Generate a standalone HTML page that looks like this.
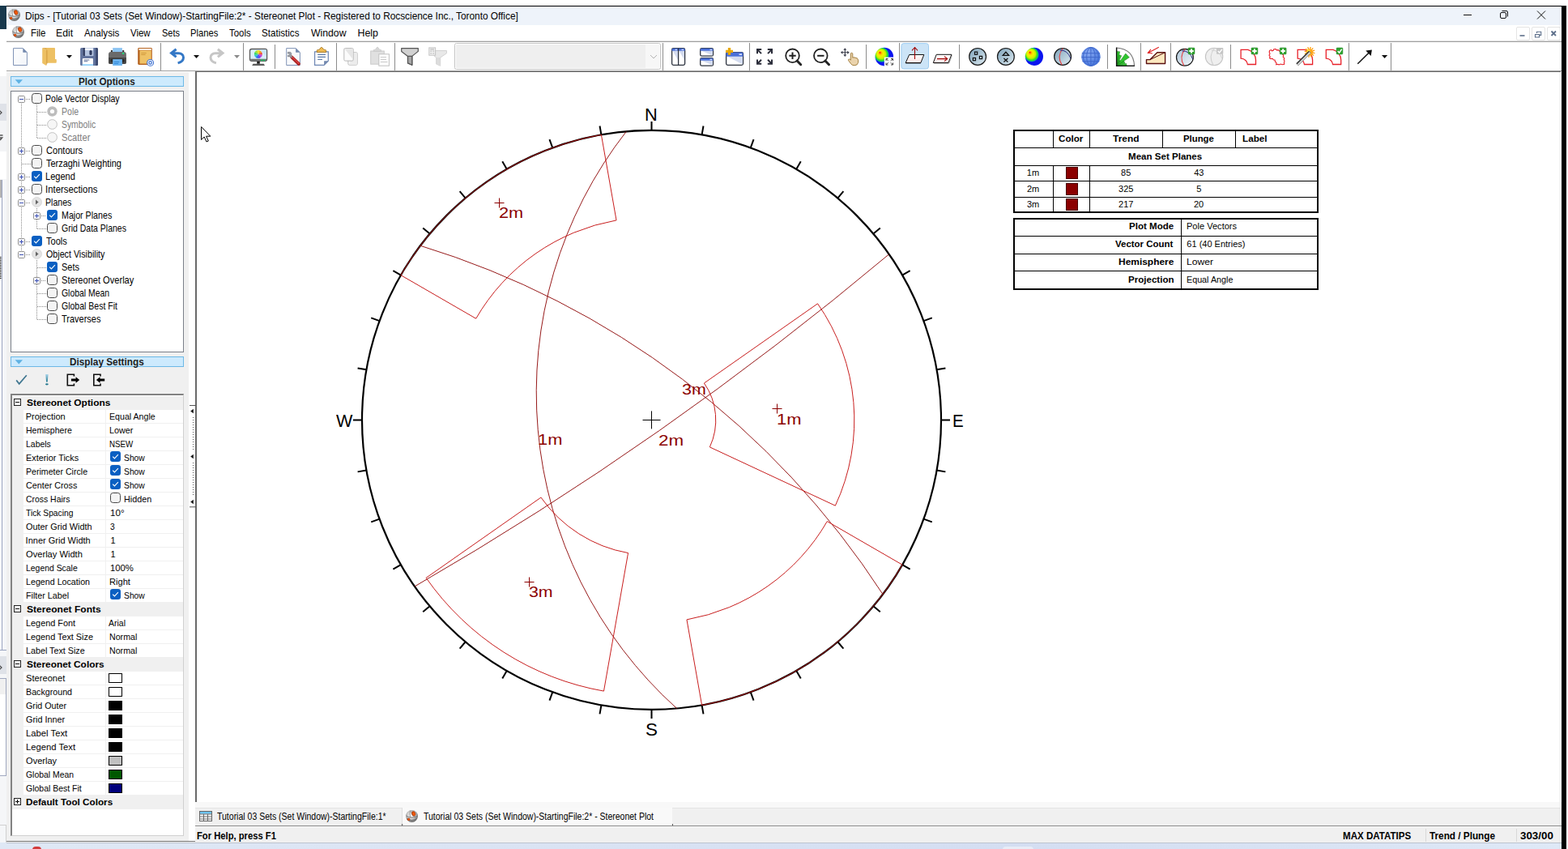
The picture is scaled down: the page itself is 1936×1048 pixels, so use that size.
<!DOCTYPE html><html><head><meta charset="utf-8"><title>Dips</title><style>
html,body{margin:0;padding:0;}
body{width:1936px;height:1048px;position:relative;overflow:hidden;background:#fff;font-family:"Liberation Sans",sans-serif;}
.t{position:absolute;white-space:nowrap;transform-origin:0 50%;}
.b{position:absolute;box-sizing:border-box;}
svg{position:absolute;overflow:visible;}
</style></head><body>
<div class="b" style="left:0px;top:36px;width:9px;height:1004px;background:#fff;"></div>
<div class="b" style="left:0px;top:94px;width:8px;height:93px;background:#f3f4f6;"></div>
<div class="b" style="left:0px;top:128px;width:8px;height:21px;background:#dfe2e8;"></div>
<svg style="left:0;top:128px" width="8" height="60" viewBox="0 0 8 60"><path d="M-2 7L2 11L-2 15" fill="none" stroke="#444" stroke-width="1.200"/><path d="M-3 39H3.500M-3 42H2.500L0 45" fill="none" stroke="#555" stroke-width="1.600"/></svg>
<div class="b" style="left:0px;top:221px;width:8px;height:819px;background:#f5f6f8;"></div>
<div class="b" style="left:0px;top:222px;width:2px;height:581px;background:#fff;"></div>
<div class="b" style="left:0px;top:222px;width:2px;height:22px;background:#b4b4b4;"></div>
<div class="b" style="left:1.5px;top:222px;width:1px;height:581px;background:#9aa4c0;"></div>
<div class="b" style="left:0px;top:802px;width:8px;height:1px;background:#9aa4c0;"></div>
<svg style="left:0;top:317px" width="2" height="28" viewBox="0 0 2 28"><path d="M0 0.500H1.500M0 2.500H1.500M0 4.500H1.500M0 6.500H1.500M0 8.500H1.500M0 10.500H1.500M0 12.500H1.500M0 14.500H1.500M0 16.500H1.500M0 18.500H1.500M0 20.500H1.500M0 22.500H1.500M0 24.500H1.500M0 26.500H1.500" stroke="#111" stroke-width="1"/></svg>
<div class="b" style="left:0px;top:810px;width:8px;height:22px;background:#dfe2e8;"></div>
<svg style="left:0;top:810px" width="8" height="22" viewBox="0 0 8 22"><path d="M-2 10L2 14L-2 18" fill="none" stroke="#444" stroke-width="1.200"/></svg>
<div class="b" style="left:-1px;top:837px;width:8.5px;height:121px;background:#fff;border:1px solid #a0a8c0;"></div>
<div class="b" style="left:0px;top:838px;width:6.5px;height:19px;background:#f0f0f0;"></div>
<div class="b" style="left:0px;top:1018px;width:7px;height:1px;background:#d0d0d0;"></div>
<div class="b" style="left:6.5px;top:1018px;width:1px;height:22px;background:#d0d0d0;"></div>
<div class="b" style="left:0px;top:7px;width:8px;height:29px;background:#17384c;"></div>
<div class="b" style="left:8px;top:7px;width:1926px;height:1px;background:#000;"></div>
<div class="b" style="left:1928px;top:7px;width:6px;height:1041px;background:#000;"></div>
<div class="b" style="left:9px;top:8px;width:1919px;height:23px;background:#eef3fa;"></div>
<svg style="left:10px;top:10.8px" width="15" height="15" viewBox="0 0 15 15"><defs><radialGradient id="lg1" cx="45%" cy="42%" r="58%"><stop offset="0" stop-color="#fafafa"/><stop offset="0.55" stop-color="#d0d0d0"/><stop offset="0.85" stop-color="#8c8c8c"/><stop offset="1" stop-color="#5c5c5c"/></radialGradient></defs><circle cx="7.5" cy="7.500" r="7.400" fill="url(#lg1)"/><path d="M5.600 0.600 C4.800 3.500 5 6.500 5.800 8.800" fill="none" stroke="#777" stroke-width="0.700"/><path d="M0.500 6.800 C3.500 9.800 10.500 10 14.700 7.200" fill="none" stroke="#6e6e6e" stroke-width="0.900"/><path d="M1.200 10.800 C4.500 13.200 10.500 13 13.800 10.300" fill="none" stroke="#707070" stroke-width="1.100"/><path d="M7.200 1.300 C6.800 5 8.500 8 12.200 8.200" fill="none" stroke="#7a7a7a" stroke-width="0.800"/><ellipse cx="9.700" cy="4.400" rx="2.300" ry="3.100" fill="#b8400c" transform="rotate(-22 9.700 4.400)"/><ellipse cx="9.900" cy="4.600" rx="1.500" ry="2.200" fill="#f25a0a" transform="rotate(-22 9.900 4.600)"/><circle cx="3.600" cy="11.400" r="1.700" fill="#b8400c"/><circle cx="3.700" cy="11.400" r="1" fill="#f25a0a"/></svg>
<span class="t" style="left:30.65px;top:13px;font-size:12.4px;line-height:14px;color:#000;transform:scaleX(0.9550);">Dips - [Tutorial 03 Sets (Set Window)-StartingFile:2* - Stereonet Plot - Registered to Rocscience Inc., Toronto Office]</span>
<svg style="left:1800px;top:8px" width="128" height="23" viewBox="0 0 128 23"><g fill="none" stroke="#111" stroke-width="1"><path d="M7 10.5H17"/><rect x="52.5" y="7.5" width="7" height="7" rx="1.5"/><path d="M54.5 5.5H60a1.5 1.5 0 0 1 1.5 1.5V12.5"/><path d="M98 5.5L108 15.5M108 5.5L98 15.5"/></g></svg>
<div class="b" style="left:9px;top:31px;width:1919px;height:19px;background:#fff;"></div>
<svg style="left:15px;top:32px" width="15" height="15" viewBox="0 0 15 15"><defs><radialGradient id="lg2" cx="45%" cy="42%" r="58%"><stop offset="0" stop-color="#fafafa"/><stop offset="0.55" stop-color="#d0d0d0"/><stop offset="0.85" stop-color="#8c8c8c"/><stop offset="1" stop-color="#5c5c5c"/></radialGradient></defs><circle cx="7.5" cy="7.500" r="7.400" fill="url(#lg2)"/><path d="M5.600 0.600 C4.800 3.500 5 6.500 5.800 8.800" fill="none" stroke="#777" stroke-width="0.700"/><path d="M0.500 6.800 C3.500 9.800 10.500 10 14.700 7.200" fill="none" stroke="#6e6e6e" stroke-width="0.900"/><path d="M1.200 10.800 C4.500 13.200 10.500 13 13.800 10.300" fill="none" stroke="#707070" stroke-width="1.100"/><path d="M7.200 1.300 C6.800 5 8.500 8 12.200 8.200" fill="none" stroke="#7a7a7a" stroke-width="0.800"/><ellipse cx="9.700" cy="4.400" rx="2.300" ry="3.100" fill="#b8400c" transform="rotate(-22 9.700 4.400)"/><ellipse cx="9.900" cy="4.600" rx="1.500" ry="2.200" fill="#f25a0a" transform="rotate(-22 9.900 4.600)"/><circle cx="3.600" cy="11.400" r="1.700" fill="#b8400c"/><circle cx="3.700" cy="11.400" r="1" fill="#f25a0a"/></svg>
<span class="t" style="left:37.58px;top:34px;font-size:12.4px;line-height:14px;color:#000;transform:scaleX(0.9238);">File</span>
<span class="t" style="left:68.52px;top:34px;font-size:12.4px;line-height:14px;color:#000;transform:scaleX(0.9868);">Edit</span>
<span class="t" style="left:104.00px;top:34px;font-size:12.4px;line-height:14px;color:#000;transform:scaleX(0.9404);">Analysis</span>
<span class="t" style="left:160.94px;top:34px;font-size:12.4px;line-height:14px;color:#000;transform:scaleX(0.9216);">View</span>
<span class="t" style="left:199.51px;top:34px;font-size:12.4px;line-height:14px;color:#000;transform:scaleX(0.8826);">Sets</span>
<span class="t" style="left:234.60px;top:34px;font-size:12.4px;line-height:14px;color:#000;transform:scaleX(0.9042);">Planes</span>
<span class="t" style="left:283.27px;top:34px;font-size:12.4px;line-height:14px;color:#000;transform:scaleX(0.9200);">Tools</span>
<span class="t" style="left:323.48px;top:34px;font-size:12.4px;line-height:14px;color:#000;transform:scaleX(0.9367);">Statistics</span>
<span class="t" style="left:383.94px;top:34px;font-size:12.4px;line-height:14px;color:#000;transform:scaleX(0.9873);">Window</span>
<span class="t" style="left:441.51px;top:34px;font-size:12.4px;line-height:14px;color:#000;">Help</span>
<div class="b" style="left:1871.5px;top:32.5px;width:17px;height:17px;background:#fff;border:1px solid #e5e5e5;border-radius:2px;"></div>
<div class="b" style="left:1890.5px;top:32.5px;width:17px;height:17px;background:#fff;border:1px solid #e5e5e5;border-radius:2px;"></div>
<div class="b" style="left:1909.5px;top:32.5px;width:17px;height:17px;background:#fff;border:1px solid #e5e5e5;border-radius:2px;"></div>
<svg style="left:1871px;top:32px" width="57" height="18" viewBox="0 0 57 18"><g fill="none" stroke="#5d6f8a" stroke-width="1.3"><path d="M5.5 12H11.5" stroke-width="1.6"/><path d="M24.5 10.5h5v3.5h-5z M26.5 9V7.2h5.2v4.2H30" stroke-width="1.1"/><path d="M44.5 6.5L50 12M50 6.5L44.5 12" stroke-width="1.8"/></g></svg>
<div class="b" style="left:8px;top:50px;width:1920px;height:1px;background:#e0e0e0;"></div>
<div class="b" style="left:8px;top:51px;width:1920px;height:1px;background:#a0a0a0;"></div>
<div class="b" style="left:8px;top:52px;width:1920px;height:35px;background:#fff;"></div>
<div class="b" style="left:8px;top:87px;width:1920px;height:1px;background:#a0a0a0;"></div>
<div class="b" style="left:8px;top:88px;width:1920px;height:1px;background:#fff;"></div>
<div class="b" style="left:8px;top:89px;width:1920px;height:951px;background:#f0f0f0;"></div>
<div class="b" style="left:233px;top:89px;width:8px;height:949px;background:#fff;"></div>
<div class="b" style="left:241px;top:88px;width:1686px;height:902px;background:#fff;border-left:2px solid #696969;border-top:1px solid #696969;"></div>
<div class="b" style="left:1927px;top:88px;width:1px;height:902px;background:#fff;"></div>
<div class="b" style="left:1926px;top:89px;width:1px;height:901px;background:#e8e8e8;"></div>
<div class="b" style="left:241px;top:990px;width:1687px;height:7px;background:#f8f8f8;"></div>
<div class="b" style="left:496.5px;top:997px;width:333.5px;height:22px;background:#f9f9f9;"></div>
<div class="b" style="left:241px;top:997px;width:255.5px;height:1px;background:#e4e4e4;"></div>
<div class="b" style="left:830px;top:997px;width:1097px;height:1px;background:#e4e4e4;"></div>
<div class="b" style="left:496px;top:997px;width:1px;height:21px;background:#e0e0e0;"></div>
<div class="b" style="left:241px;top:1019px;width:1687px;height:1px;background:#8a8a8a;"></div>
<div class="b" style="left:241px;top:1020px;width:1687px;height:1px;background:#fafafa;"></div>
<div class="b" style="left:8px;top:1038px;width:233px;height:1px;background:#777;"></div>
<div class="b" style="left:0px;top:1040px;width:1928px;height:8px;background:linear-gradient(90deg,#dfe8f5,#dbe4f4 30%,#d4def2 65%,#d9e3f4 85%,#dfe9f7);"></div>
<div class="b" style="left:1238px;top:1045px;width:38px;height:6px;background:#e8edf7;border-radius:4px 4px 0 0;"></div>
<div class="b" style="left:8px;top:1040px;width:1920px;height:1px;background:#bcc3cf;"></div>
<svg style="left:233px;top:495px" width="9" height="136" viewBox="0 0 9 136"><g fill="#111" stroke="none"><path d="M2.2 12.5 L5.8 9.7 V15.3 Z"/><path d="M2.2 68.5 L5.8 65.7 V71.3 Z"/><path d="M2.2 124.5 L5.8 121.7 V127.3 Z"/></g><path d="M1 5.5H9M1 130.800H9" stroke="#555" stroke-width="1" fill="none"/><path d="M5.5 20V61M5.5 76V117" stroke="#555" stroke-width="1" stroke-dasharray="1 2" fill="none"/></svg>
<svg style="left:246px;top:1001px" width="16" height="13" viewBox="0 0 16 13"><rect x="0.5" y="0.5" width="15" height="12" fill="#fff" stroke="#666"/><rect x="1" y="1" width="14" height="2.6" fill="#6cc3f7"/><path d="M0.5 4H15.5M0.5 7H15.5M0.5 10H15.5M5.5 4V12.5M10.5 4V12.5" stroke="#666" stroke-width="1" fill="none"/></svg>
<span class="t" style="left:268.09px;top:1001px;font-size:12px;line-height:14px;color:#000;transform:scaleX(0.8752);">Tutorial 03 Sets (Set Window)-StartingFile:1*</span>
<div class="b" style="left:496px;top:1017px;width:1px;height:2px;background:#555;"></div>
<div class="b" style="left:830px;top:1017px;width:1px;height:2px;background:#555;"></div>
<svg style="left:500.5px;top:1000px" width="15" height="15" viewBox="0 0 15 15"><defs><radialGradient id="lg3" cx="45%" cy="42%" r="58%"><stop offset="0" stop-color="#fafafa"/><stop offset="0.55" stop-color="#d0d0d0"/><stop offset="0.85" stop-color="#8c8c8c"/><stop offset="1" stop-color="#5c5c5c"/></radialGradient></defs><circle cx="7.5" cy="7.500" r="7.400" fill="url(#lg3)"/><path d="M5.600 0.600 C4.800 3.500 5 6.500 5.800 8.800" fill="none" stroke="#777" stroke-width="0.700"/><path d="M0.500 6.800 C3.500 9.800 10.500 10 14.700 7.200" fill="none" stroke="#6e6e6e" stroke-width="0.900"/><path d="M1.200 10.800 C4.500 13.200 10.500 13 13.800 10.300" fill="none" stroke="#707070" stroke-width="1.100"/><path d="M7.200 1.300 C6.800 5 8.500 8 12.200 8.200" fill="none" stroke="#7a7a7a" stroke-width="0.800"/><ellipse cx="9.700" cy="4.400" rx="2.300" ry="3.100" fill="#b8400c" transform="rotate(-22 9.700 4.400)"/><ellipse cx="9.900" cy="4.600" rx="1.500" ry="2.200" fill="#f25a0a" transform="rotate(-22 9.900 4.600)"/><circle cx="3.600" cy="11.400" r="1.700" fill="#b8400c"/><circle cx="3.700" cy="11.400" r="1" fill="#f25a0a"/></svg>
<span class="t" style="left:523.09px;top:1001px;font-size:12px;line-height:14px;color:#000;transform:scaleX(0.8737);">Tutorial 03 Sets (Set Window)-StartingFile:2* - Stereonet Plot</span>
<span class="t" style="left:242.87px;top:1025px;font-size:12.2px;line-height:14px;color:#000;font-weight:bold;transform:scaleX(0.9207);">For Help, press F1</span>
<span class="t" style="left:1657.75px;top:1025px;font-size:12.2px;line-height:14px;color:#000;font-weight:bold;transform:scaleX(0.9491);">MAX DATATIPS</span>
<span class="t" style="left:1765.38px;top:1025px;font-size:12.2px;line-height:14px;color:#000;font-weight:bold;transform:scaleX(0.9649);">Trend / Plunge</span>
<span class="t" style="left:1876.67px;top:1025px;font-size:12.2px;line-height:14px;color:#000;font-weight:bold;transform:scaleX(1.0957);">303/00</span>
<div class="b" style="left:1760px;top:1023px;width:1px;height:16px;background:#d8d8d8;"></div>
<div class="b" style="left:1872px;top:1023px;width:1px;height:16px;background:#d8d8d8;"></div>
<svg style="left:248px;top:156px" width="13" height="20" viewBox="0 0 13 20"><path d="M0.5 0.5V16.5L4.2 13L7 19L9.3 18L6.6 12.2H11.8Z" fill="#fff" stroke="#000" stroke-width="1"/></svg>
<div class="b" style="left:40px;top:1045px;width:11px;height:8px;background:#d23b3b;border-radius:6px;"></div>
<svg style="left:0;top:52px" width="1936" height="36" viewBox="0 52 1936 36"><defs><radialGradient id="cont" cx="36%" cy="40%" fx="26%" fy="26%" r="41%"><stop offset="0" stop-color="#f01800"/><stop offset="0.08" stop-color="#ff5a00"/><stop offset="0.2" stop-color="#ffc000"/><stop offset="0.36" stop-color="#f4f000"/><stop offset="0.62" stop-color="#c8f000"/><stop offset="0.8" stop-color="#30e020"/><stop offset="0.91" stop-color="#10b48a"/><stop offset="1" stop-color="#0a14f0"/></radialGradient><linearGradient id="glassL" x1="0.1" y1="0.1" x2="0.9" y2="0.9"><stop offset="0" stop-color="#86a9bf"/><stop offset="1" stop-color="#d6e4ec"/></linearGradient><radialGradient id="glass" cx="40%" cy="35%" r="70%"><stop offset="0" stop-color="#d3e3ec"/><stop offset="1" stop-color="#8fb0c6"/></radialGradient><radialGradient id="glass2" cx="40%" cy="35%" r="70%"><stop offset="0" stop-color="#e6eef4"/><stop offset="1" stop-color="#9eb6c8"/></radialGradient><radialGradient id="globe" cx="40%" cy="35%" r="70%"><stop offset="0" stop-color="#7fa2ea"/><stop offset="1" stop-color="#3f6fd8"/></radialGradient><linearGradient id="pg" x1="0" y1="0" x2="1" y2="1"><stop offset="0" stop-color="#fff"/><stop offset="1" stop-color="#f1f4f9"/></linearGradient></defs><path d="M198.5 53V87M300.5 53V87M415.5 53V87M487.5 53V87M818.5 53V87M925.5 53V87M1110.5 53V87M1408.5 53V87M1445.5 53V87M1665.5 53V87M1717.5 53V87M339.5 55V85M1069.5 55V85M1184.5 55V85M1367.5 55V85M1519.5 55V85" stroke="#8c8c8c" stroke-width="1" fill="none"/><path d="M16.5 59.6H28.300L33.400 64.700V80.500H16.5Z" fill="url(#pg)" stroke="#8093b6" stroke-width="1"/><path d="M28.300 59.600V64.700H33.400Z" fill="#7187ad"/><path d="M57 59.100H67Q68 59.100 68 60.100V73H69Q69.800 73 69.800 74V76.700Q69.800 77.700 68.800 77.700H57Z" fill="#edc063"/><path d="M52.200 59.300L57.100 61.800V81L52.200 78Z" fill="#edc063"/><path d="M57.100 61.800L58.600 62.300V77.700L57.100 81Z" fill="#d9a548"/><path d="M52.200 59.300L53.500 59.100H57L58.600 62.300L57.100 61.800Z" fill="#e2b054"/><path d="M82 68H89L85.500 72.100Z" fill="#111"/><rect x="99.100" y="59.100" width="21.900" height="21.900" rx="1.600" fill="#62749e"/><path d="M118.200 59.100H119.400Q121 59.100 121 60.700V79.400Q121 81 119.400 81H118.200Z" fill="#3d4a70"/><rect x="102.400" y="59.100" width="13" height="9.900" fill="#b6c6e2"/><path d="M102.400 59.100H104.900V69H103.400Q102.400 69 102.400 68Z" fill="#2f3b60"/><rect x="104.900" y="59.600" width="10" height="2.300" fill="#f4f7fc"/><rect x="110.400" y="61.900" width="3.200" height="6" rx="1.500" fill="#2f3b60"/><path d="M101.800 73.100Q101.800 72.100 102.800 72.100H114Q115 72.100 115 73.100V81H101.800Z" fill="#fff"/><rect x="101.800" y="79.300" width="13.200" height="1.700" fill="#8fd0fb"/><path d="M103.600 74H110.400M103.600 75.800H108.300" stroke="#62749e" stroke-width="1.100"/><rect x="139.200" y="59.100" width="11.700" height="6" fill="#8cc4f2"/><rect x="136.900" y="62" width="2" height="2.500" fill="#333"/><rect x="151.200" y="62" width="2" height="2.500" fill="#333"/><path d="M134 67Q134 64.100 137 64.100H153Q155.900 64.100 155.900 67V77Q155.900 79 153.900 79H136Q134 79 134 77Z" fill="#6a6a6a"/><path d="M134 70.900H155.900V77Q155.900 79 153.900 79H136Q134 79 134 77Z" fill="#474747"/><rect x="136.400" y="72.800" width="17.600" height="4" rx="2" fill="#2b2b2b"/><rect x="139.200" y="73.100" width="11.700" height="7.900" fill="#6db6f2"/><path d="M140.700 76.500H147.200M140.700 78.500H146.200" stroke="#2f86d8" stroke-width="1"/><circle cx="152.100" cy="65.900" r="1.200" fill="#1fdc7a"/><rect x="170.200" y="59.100" width="17.600" height="20.800" rx="1.300" fill="#b5621f"/><rect x="172.500" y="62.300" width="14.200" height="16.300" fill="#efc266"/><rect x="171.400" y="60.100" width="15.500" height="1.700" rx="0.500" fill="#fff"/><path d="M174.200 65.500H180.700M174.200 67.500H179.600" stroke="#d19a3e" stroke-width="1.100"/><circle cx="185.600" cy="77.400" r="3.900" fill="#fff" stroke="#3b6fd0" stroke-width="1.100"/><circle cx="185.600" cy="77.400" r="1.700" fill="none" stroke="#3b6fd0" stroke-width="1.200"/><path d="M217.600 60.700L211.500 65.500L217.600 70.400 M212 65.800H220.500C228.300 65.800 229 75.500 219.600 77.900" fill="none" stroke="#3478c6" stroke-width="3" stroke-linejoin="miter"/><path d="M239 68H246L242.500 72.100Z" fill="#111"/><path transform="translate(486.500 0) scale(-1 1)" d="M217.600 60.700L211.500 65.500L217.600 70.400 M212 65.800H220.500C228.300 65.800 229 75.500 219.600 77.900" fill="none" stroke="#c6c6c6" stroke-width="3"/><path d="M289 68H296L292.500 72.100Z" fill="#8a8a8a"/><rect x="308.500" y="60.500" width="21.100" height="14.900" rx="2.300" fill="#d9eefb" stroke="#5a5a5a" stroke-width="1.300"/><path d="M309.200 72.800H328.900V73.500Q328.900 74.800 327.500 74.800H310.600Q309.200 74.800 309.200 73.500Z" fill="#6a6a6a"/><path d="M321 61.200H328.900V70Z" fill="#c6e4f8"/><rect x="317.200" y="75.900" width="3.600" height="2.900" fill="#1c1c1c"/><path d="M312.500 78.700H325.700L327 81H311.200Z" fill="#5a5a5a"/><path d="M318.9 66.9L317.19 62.20A5 5 0 0 1 320.69 62.23Z" fill="#f7e21c"/><path d="M318.9 66.9L320.61 62.20A5 5 0 0 1 323.27 64.48Z" fill="#f5a31d"/><path d="M318.9 66.9L323.23 64.40A5 5 0 0 1 323.81 67.85Z" fill="#ee4a35"/><path d="M318.9 66.9L323.82 67.77A5 5 0 0 1 322.05 70.79Z" fill="#c63ad8"/><path d="M318.9 66.9L322.11 70.73A5 5 0 0 1 318.81 71.90Z" fill="#6a3cf0"/><path d="M318.9 66.9L318.90 71.90A5 5 0 0 1 315.62 70.67Z" fill="#2a6cf0"/><path d="M318.9 66.9L315.69 70.73A5 5 0 0 1 313.96 67.68Z" fill="#2cc4d0"/><path d="M318.9 66.9L313.98 67.77A5 5 0 0 1 314.61 64.32Z" fill="#35d86a"/><path d="M318.9 66.9L314.57 64.40A5 5 0 0 1 317.27 62.17Z" fill="#9ae03a"/><circle cx="323.100" cy="74.400" r="1.100" fill="#1fd06a"/><circle cx="326.200" cy="74.400" r="1.100" fill="#1fd06a"/><path d="M353.700 59.600H365.100L370.400 64.700V80.500H353.700Z" fill="url(#pg)" stroke="#8093b6" stroke-width="1"/><path d="M365.100 59.600V64.700H370.400Z" fill="#7187ad"/><path d="M360.300 70.600L368.800 78.800" stroke="#a51c1c" stroke-width="4" stroke-linecap="round"/><path d="M360.600 70.300L368.900 78.300" stroke="#d23c3c" stroke-width="2" stroke-linecap="round"/><path d="M355.300 64.300H358.600L359.800 65.500V69L361 70.300L359.800 71.400L358.300 69.900H355.300V68.200H357.500V66.200H355.300Z" fill="#9a9ea6" stroke="#6f7378" stroke-width="0.500"/><path d="M388.600 63.800H405.300V75.200L400.100 80.400H388.600Z" fill="#fff" stroke="#6d86b3" stroke-width="1.200"/><path d="M405.300 75.200H400.100V80.400Z" fill="#7187ad"/><path d="M391.300 64.400V62.400Q391.300 61.500 392.300 61.500H393.800L396.200 58.700Q396.900 58.100 397.700 58.700L400.100 61.500H401.600Q402.600 61.500 402.600 62.400V64.400Z" fill="#f0bc55" stroke="#9a6a10" stroke-width="0.800"/><path d="M392.200 67.400H402M392.200 70.400H402M392.200 73.500H398" stroke="#5878a8" stroke-width="1.200"/><rect x="429.800" y="64.700" width="11.400" height="15.500" rx="1.500" fill="#f7f7f7" stroke="#bdbdbd"/><path d="M437 65.200H440.700V79.700H431Z" fill="#ececec"/><rect x="424.800" y="59.600" width="11.400" height="15.500" rx="1.500" fill="#fbfbfb" stroke="#b8b8b8"/><path d="M425.500 60.300H435.600V73Z" fill="#e6e6e6"/><rect x="457.700" y="63" width="16.600" height="16.200" fill="#e0e0e0" stroke="#cacaca"/><path d="M461.300 63.500V61.500H463L465.500 58.300H466.500L469 61.500H470.600V63.500Z" fill="#d6d6d6" stroke="#c6c6c6" stroke-width="0.600"/><rect x="467.800" y="66.800" width="12.600" height="14.400" fill="#fdfdfd" stroke="#c0c0c0"/><path d="M469.800 70.600H477M469.800 73.500H477M469.800 76.500H478.500" stroke="#c8c8c8" stroke-width="1"/><path d="M495.700 59.700H516.300V63.400L508.800 69.400V80.300L503.500 77.900V69.400L495.700 63.400Z" fill="#d2d2d2" stroke="#555" stroke-width="1.200" stroke-linejoin="round"/><path d="M503.500 69.400H508.800V80.300L503.500 77.900Z" fill="#a8a8a8" stroke="#555" stroke-width="1.200" stroke-linejoin="round"/><path d="M536 62.500H551.400V65.800L543.700 71V81.300L538.500 78.900V71L536 69Z" fill="#e8e8e8" stroke="#d2d2d2" stroke-width="1" stroke-linejoin="round"/><path d="M538.500 71H543.700V81.300L538.500 78.900Z" fill="#dcdcdc"/><rect x="529.800" y="58.900" width="7.800" height="9.300" fill="#f2f2f2" stroke="#c2c2c2"/><path d="M531.300 60.800H536M531.300 63.200H533.200M534.300 63.200H536.200M531.300 65.800H533.200M534.300 65.800H536.200" stroke="#bdbdbd" stroke-width="1.200"/><rect x="561.500" y="53.500" width="254" height="32" rx="2" fill="#fff" stroke="#c4c4c4"/><rect x="563" y="55" width="234" height="29" fill="#efefef"/><rect x="797" y="55" width="17" height="29" fill="#f7f7f7"/><path d="M803 68L807 72L811 68" fill="none" stroke="#b4b4b4" stroke-width="1"/><rect x="829.600" y="59.700" width="16" height="20.700" rx="1.800" fill="#fff" stroke="#2e3440" stroke-width="1.300"/><path d="M830.500 62.800H837L837 74ZM838.500 62.800H845L845 74Z" fill="#d3dbef"/><path d="M829.600 61.300Q829.600 59.700 831.200 59.700H844Q845.600 59.700 845.600 61.300V62.800H829.600Z" fill="#4a6fd8"/><path d="M837.600 59.700V80.400" stroke="#2e3440" stroke-width="1.300"/><path d="M833.500 61.300H836M841.500 61.300H844" stroke="#fff" stroke-width="0.900"/><rect x="864.700" y="59.7" width="15.800" height="9.5" rx="1.800" fill="#fff" stroke="#2e3440" stroke-width="1.300"/><path d="M866 62.8H880L880 68.4Z" fill="#d3dbef"/><path d="M864.700 61.3Q864.700 59.7 866.300 59.7H878.900Q880.500 59.7 880.500 61.3V62.8H864.700Z" fill="#4a6fd8"/><path d="M876.500 61.3H879.200" stroke="#fff" stroke-width="0.900"/><rect x="864.700" y="71.7" width="15.800" height="9.5" rx="1.800" fill="#fff" stroke="#2e3440" stroke-width="1.300"/><path d="M866 74.8H880L880 80.4Z" fill="#d3dbef"/><path d="M864.700 73.3Q864.700 71.7 866.300 71.7H878.900Q880.500 71.7 880.500 73.3V74.8H864.700Z" fill="#4a6fd8"/><path d="M876.500 73.3H879.200" stroke="#fff" stroke-width="0.900"/><rect x="896.600" y="64.600" width="20.900" height="15.800" rx="1.800" fill="#fff" stroke="#2e3440" stroke-width="1.300"/><path d="M898 69.800H917L917 79.500Z" fill="#d3dbef"/><path d="M896.600 66.200Q896.600 64.600 898.200 64.600H915.900Q917.500 64.600 917.500 66.200V69.800H896.600Z" fill="#4a6fd8"/><path d="M912.500 67.200H916" stroke="#fff" stroke-width="1.300"/><path d="M900.500 58.900V67.800M896 63.300H905" stroke="#e8a800" stroke-width="3.300"/><g transform="translate(954 60.1) scale(1 1)"><path d="M-6.200 1H-1V6.200M-1.300 1.300L-6 6" fill="none" stroke="#2b2d3a" stroke-width="2"/></g><g transform="translate(934 60.1) scale(-1 1)"><path d="M-6.200 1H-1V6.200M-1.300 1.300L-6 6" fill="none" stroke="#2b2d3a" stroke-width="2"/></g><g transform="translate(954 79.8) scale(1 -1)"><path d="M-6.200 1H-1V6.200M-1.300 1.300L-6 6" fill="none" stroke="#2b2d3a" stroke-width="2"/></g><g transform="translate(934 79.8) scale(-1 -1)"><path d="M-6.200 1H-1V6.200M-1.300 1.300L-6 6" fill="none" stroke="#2b2d3a" stroke-width="2"/></g><circle cx="978.5" cy="68.800" r="8.300" fill="none" stroke="#222" stroke-width="1.800"/><path d="M984.1 75L988.7 79.700" stroke="#222" stroke-width="3" stroke-linecap="round"/><path d="M974.3 68.800H982.7M978.5 64.600V73" stroke="#222" stroke-width="2" fill="none"/><circle cx="1013.3" cy="68.800" r="8.300" fill="none" stroke="#222" stroke-width="1.800"/><path d="M1018.9 75L1023.5 79.700" stroke="#222" stroke-width="3" stroke-linecap="round"/><path d="M1009.1 68.800H1017.5" stroke="#222" stroke-width="2" fill="none"/><path d="M1043.300 60.500V69M1039 64.700H1047.600" stroke="#3a3d4a" stroke-width="1.100"/><path d="M1043.300 59.300L1041.300 61.800H1045.300ZM1043.300 70.100L1041.300 67.600H1045.300ZM1037.900 64.700L1040.400 62.700V66.700ZM1048.700 64.700L1046.200 62.700V66.700Z" fill="#3a3d4a"/><path d="M1050.300 66.800Q1050.300 65.300 1051.500 65.300Q1052.800 65.300 1052.800 66.800V71.300Q1053.800 70.300 1055 71.100Q1056 70.600 1057 71.700Q1058.200 71.300 1059 72.600Q1060.300 74.700 1059.500 77.500Q1058.500 80.800 1055 80.800Q1052 80.800 1050.500 78.600L1047.500 74.600Q1047 73.200 1048.400 73Q1049.400 73 1050.300 74.200Z" fill="#ead3ac" stroke="#9a7430" stroke-width="0.900"/><circle cx="1091.800" cy="70.100" r="11.300" fill="url(#cont)"/><rect x="1091.800" y="70.600" width="12.500" height="11.700" fill="#fff"/><g fill="none" stroke="#333" stroke-width="0.900"><path d="M1094 75V72.500H1096.500M1094.200 72.700L1096.800 75.300M1100 72.500H1102.500V75M1102.300 72.700L1099.700 75.300M1094 77.500V80H1096.500M1094.200 79.800L1096.800 77.200M1102.500 77.500V80H1100M1102.300 79.800L1099.700 77.200"/></g><rect x="1112.900" y="53.600" width="33.600" height="31.400" rx="3" fill="#cce4f7" stroke="#9fcdf2"/><defs><linearGradient id="pk" x1="0" y1="0" x2="0" y2="1"><stop offset="0" stop-color="#fff"/><stop offset="1" stop-color="#fde4e4"/></linearGradient></defs><path d="M1122.700 67.500H1140.800L1136.900 77.500H1118.200Z" fill="url(#pk)" stroke="#111" stroke-width="1"/><path d="M1118.200 77.700H1136.900" stroke="#111" stroke-width="1.400"/><path d="M1129.500 73V58.600M1126 62.300L1129.500 58.500L1133 62.300" fill="none" stroke="#a00000" stroke-width="1.050"/><path d="M1153.200 78.300H1171.800L1175.600 68.200" fill="none" stroke="#bbb" stroke-width="1"/><path d="M1156.200 67.300H1174.900L1171 77.500H1152.300Z" fill="url(#pk)" stroke="#111" stroke-width="1"/><path d="M1157 72.600H1169.600M1166 69.600L1169.700 72.600L1166 75.600" fill="none" stroke="#a00000" stroke-width="1.050"/><circle cx="1207.100" cy="69.900" r="10.400" fill="url(#glassL)" stroke="#1a1a1a" stroke-width="1.200"/><g fill="none" stroke="#111" stroke-width="1.200"><rect x="1203.500" y="64.100" width="3.200" height="3.200"/><rect x="1201.300" y="71.500" width="3.200" height="3.200"/><rect x="1209.400" y="69.400" width="3.200" height="3.200"/></g><circle cx="1241.900" cy="69.900" r="10.400" fill="url(#glassL)" stroke="#1a1a1a" stroke-width="1.200"/><g fill="none" stroke="#111" stroke-width="1.300"><path d="M1241.900 64.300L1245.600 68.400H1238.200Z"/><path d="M1239.400 72.100L1244.400 76.500M1244.400 72.100L1239.400 76.500"/></g><circle cx="1276.900" cy="69.800" r="11.100" fill="url(#cont)"/><circle cx="1312.100" cy="69.900" r="10.400" fill="url(#glassL)" stroke="#141414" stroke-width="1.200"/><path d="M1312.400 59.500Q1304.500 69.500 1311.100 80.100" fill="none" stroke="#e83a3a" stroke-width="1.100"/><path d="M1308.600 61.900Q1318 61.500 1321.900 72.100" fill="none" stroke="#2a2a80" stroke-width="1"/><defs><radialGradient id="globe2" cx="35%" cy="30%" r="75%"><stop offset="0" stop-color="#8aabf2"/><stop offset="1" stop-color="#4675dc"/></radialGradient></defs><circle cx="1346.900" cy="69.900" r="11.700" fill="url(#globe2)"/><g fill="none" stroke="#3f68cc" stroke-width="1"><ellipse cx="1346.900" cy="69.900" rx="5.200" ry="11.400"/><path d="M1346.900 58.400V81.400M1335.800 65.700H1358M1335.300 70.600H1358.500M1336.400 75.700H1357.400"/><ellipse cx="1346.900" cy="69.900" rx="9.500" ry="11.500"/></g><path d="M1378.600 59Q1399.600 60.500 1400.600 81.400H1378.600Z" fill="#fff" stroke="#777" stroke-width="1.200"/><path d="M1378.6 81.4L1378.60 63.40L1382.65 63.86ZM1378.6 81.4L1381.75 67.76L1384.74 68.82ZM1378.6 81.4L1389.77 66.03L1394.35 70.78ZM1378.6 81.4L1387.72 75.25L1389.17 78.37ZM1378.6 81.4L1390.73 78.38L1391.10 81.40ZM1378.6 81.4L1382.11 74.21L1383.30 74.93Z" fill="#2fc52f" stroke="#1d7a1d" stroke-width="0.500"/><path d="M1378.600 58.800V81.400H1400.800" fill="none" stroke="#111" stroke-width="1.400"/><path d="M1415.500 78.500V73.600H1420L1428.900 64.700H1438.600V78.500Z" fill="#fde9c0" stroke="#5a1010" stroke-width="1.400" stroke-linejoin="round"/><path d="M1420 73.600L1438.300 64.900" fill="none" stroke="#5a1010" stroke-width="1"/><path d="M1430.800 58.300L1417.300 65.400M1421 60.800L1417.300 65.400L1423 66" fill="none" stroke="#e02020" stroke-width="1.100"/><defs><linearGradient id="glassM" x1="0.1" y1="0.1" x2="0.9" y2="0.9"><stop offset="0" stop-color="#b4cbdc"/><stop offset="1" stop-color="#eef3f7"/></linearGradient></defs><circle cx="1462.900" cy="70.800" r="10.400" fill="url(#glassM)" stroke="#141414" stroke-width="1.200"/><path d="M1463.200 60.400Q1455.300 70.400 1461.900 81" fill="none" stroke="#e83a3a" stroke-width="1.100"/><path d="M1459.400 62.800Q1468.800 62.400 1472.700 73" fill="none" stroke="#2a2a80" stroke-width="1"/><rect x="1467.100" y="59.100" width="7.900" height="7.800" rx="0.800" fill="#2fa52f" stroke="#1c7a25" stroke-width="0.500"/><path d="M1471.050 60.300V65.700M1468.300 63H1473.800" stroke="#fff" stroke-width="1.900"/><circle cx="1499.100" cy="70" r="10.700" fill="#efefef" stroke="#c4c4c4" stroke-width="1.100"/><path d="M1499.400 59.500Q1491.500 69.500 1498.100 80.500" fill="none" stroke="#cfcfcf" stroke-width="1.100"/><path d="M1495.600 61.900Q1505 61.500 1508.900 72.100" fill="none" stroke="#d4d4d4" stroke-width="1"/><rect x="1502" y="59" width="8.300" height="7.800" rx="0.800" fill="#c6c6c6"/><path d="M1503.800 62.900L1505.700 64.900L1508.800 60.800" stroke="#fff" stroke-width="1.400" fill="none"/><path transform="translate(1532.100 61.300)" d="M0 0H8.700C13.700 1.200 18.400 6.700 18.400 12.700V18.200H8.300C8 14.200 4.700 11.100 0 10.900Z" fill="none" stroke="#e8202a" stroke-width="1.300"/><rect x="1545" y="59" width="7.900" height="7.900" rx="0.800" fill="#2fa52f" stroke="#1c7a25" stroke-width="0.500"/><path d="M1548.95 60.2V65.7M1546.2 62.95H1551.7" stroke="#fff" stroke-width="1.900"/><path transform="translate(1567.200 61.300)" d="M0.5 1 L2.5 0.3 L3.2 1.5 L5 1 L5.6 -0.5 L8 -0.8 L9 0.6 L11 0.3 L13.5 2.5 L14.5 4.5 L16 5 L17.5 7 L17 9 L18.6 10.5 L18 12.5 L18.8 14 L18.2 16 L18.5 18 L16 18.5 L14 17.8 L12 18.6 L10 18 L8.5 18.4 L8.7 16 L7.2 15 L7 13 L5 12.5 L4 11 L2 11.3 L0.3 10.5 L1 8.5 L-0.2 7 L0.8 5 L-0.1 3 Z" fill="none" stroke="#e8202a" stroke-width="1.100"/><rect x="1580.2" y="59" width="7.900" height="7.900" rx="0.800" fill="#2fa52f" stroke="#1c7a25" stroke-width="0.500"/><path d="M1584.15 60.2V65.7M1581.4 62.95H1586.9" stroke="#fff" stroke-width="1.900"/><path transform="translate(1602.200 61.300)" d="M0 0H8.700C13.700 1.200 18.400 6.700 18.400 12.700V18.200H8.300C8 14.200 4.700 11.100 0 10.900Z" fill="none" stroke="#e8202a" stroke-width="1.300"/><path d="M1617 64.400L1623.40 65.53M1617 64.400L1621.98 68.58M1617 64.400L1619.22 70.51M1617 64.400L1615.87 70.80M1617 64.400L1612.82 69.38M1617 64.400L1610.89 66.62M1617 64.400L1610.60 63.27M1617 64.400L1612.02 60.22M1617 64.400L1614.78 58.29M1617 64.400L1618.13 58.00M1617 64.400L1621.18 59.42M1617 64.400L1623.11 62.18" stroke="#ff9a00" stroke-width="1.300" fill="none"/><circle cx="1617" cy="64.400" r="4" fill="#ffa81a"/><circle cx="1615.500" cy="63" r="2" fill="#ffe23a"/><path d="M1601.600 79.700L1617.300 64" stroke="#3a3a3a" stroke-width="3.800"/><path d="M1602.200 80.100L1617.600 64.700" stroke="#e4e4e4" stroke-width="2"/><path d="M1602.800 80.600L1618 65.400" stroke="#9a9a9a" stroke-width="0.800"/><path transform="translate(1637.300 61.300)" d="M0 0H8.700C13.700 1.200 18.400 6.700 18.400 12.700V18.200H8.300C8 14.200 4.700 11.100 0 10.900Z" fill="none" stroke="#e8202a" stroke-width="1.300"/><rect x="1650.100" y="59" width="7.800" height="7.900" rx="0.800" fill="#2fa52f" stroke="#1c7a25" stroke-width="0.500"/><path d="M1651.700 62.900L1653.600 65L1656.700 60.600" stroke="#fff" stroke-width="1.500" fill="none"/><path d="M1676.300 78.800L1691.500 63.800" stroke="#111" stroke-width="1.500"/><path d="M1693.900 61.400L1686.300 62.600L1692.700 69.100Z" fill="#111"/><path d="M1706 68H1713.200L1709.600 72.100Z" fill="#111"/></svg>
<div class="b" style="left:13px;top:94px;width:214px;height:13px;background:#cdeafd;border:1px solid #6cb8e6;"></div><svg style="left:18px;top:97.8px" width="11" height="6" viewBox="0 0 11 6"><path d="M0.6 0.2H10L5.3 5.6Z" fill="#5fb2e3"/></svg><span class="t" style="left:96.74px;top:94px;font-size:12.4px;line-height:14px;color:#1e1e1e;font-weight:bold;transform:scaleX(0.9465);">Plot Options</span>
<div class="b" style="left:13px;top:112px;width:214px;height:323px;background:#fff;border:1px solid #7a7f89;"></div>
<svg style="left:0;top:0" width="240" height="440" viewBox="0 0 240 440"><g stroke="#8a8a8a" stroke-width="1" stroke-dasharray="1 1" fill="none"><path d="M26.5 128V310"/><path d="M45.5 129V171"/><path d="M45.5 257V283"/><path d="M45.5 321V395"/><path d="M32 122.5H38"/><path d="M46 138.5H57"/><path d="M46 154.5H57"/><path d="M46 170.5H57"/><path d="M32 186.5H38"/><path d="M27 202.5H38"/><path d="M32 218.5H38"/><path d="M32 234.5H38"/><path d="M32 250.5H38"/><path d="M51 266.5H57"/><path d="M46 282.5H57"/><path d="M32 298.5H38"/><path d="M32 314.5H38"/><path d="M46 330.5H57"/><path d="M51 346.5H57"/><path d="M46 362.5H57"/><path d="M46 378.5H57"/><path d="M46 394.5H57"/></g></svg>
<svg style="left:39px;top:115px" width="13" height="13" viewBox="0 0 13 13"><rect x="0.5" y="0.5" width="12" height="12" rx="3" fill="#f4f4f4" stroke="#484848"/></svg>
<svg style="left:22px;top:118px" width="9" height="9" viewBox="0 0 9 9"><rect x="0.5" y="0.5" width="8" height="8" rx="1.2" fill="#fff" stroke="#919191"/><path d="M2 4.5H7" stroke="#3c50b4" stroke-width="1" fill="none"/></svg>
<span class="t" style="left:56.35px;top:115px;font-size:12.2px;line-height:14px;color:#000;transform:scaleX(0.8672);">Pole Vector Display</span>
<svg style="left:58px;top:131px" width="13" height="13" viewBox="0 0 13 13"><circle cx="6.5" cy="6.5" r="6.2" fill="#bdbdbd"/><circle cx="6.5" cy="6.5" r="2.6" fill="#fff"/></svg>
<span class="t" style="left:75.55px;top:131px;font-size:12.2px;line-height:14px;color:#7d7d7d;transform:scaleX(0.8660);">Pole</span>
<svg style="left:58px;top:147px" width="13" height="13" viewBox="0 0 13 13"><circle cx="6.5" cy="6.5" r="5.9" fill="#f6f6f6" stroke="#c2c2c2" stroke-width="1"/></svg>
<span class="t" style="left:75.93px;top:147px;font-size:12.2px;line-height:14px;color:#7d7d7d;transform:scaleX(0.8522);">Symbolic</span>
<svg style="left:58px;top:163px" width="13" height="13" viewBox="0 0 13 13"><circle cx="6.5" cy="6.5" r="5.9" fill="#f6f6f6" stroke="#c2c2c2" stroke-width="1"/></svg>
<span class="t" style="left:75.90px;top:163px;font-size:12.2px;line-height:14px;color:#7d7d7d;transform:scaleX(0.9166);">Scatter</span>
<svg style="left:39px;top:179px" width="13" height="13" viewBox="0 0 13 13"><rect x="0.5" y="0.5" width="12" height="12" rx="3" fill="#f4f4f4" stroke="#484848"/></svg>
<svg style="left:22px;top:182px" width="9" height="9" viewBox="0 0 9 9"><rect x="0.5" y="0.5" width="8" height="8" rx="1.2" fill="#fff" stroke="#919191"/><path d="M2 4.5H7M4.5 2V7" stroke="#3c50b4" stroke-width="1" fill="none"/></svg>
<span class="t" style="left:56.64px;top:179px;font-size:12.2px;line-height:14px;color:#000;transform:scaleX(0.9103);">Contours</span>
<svg style="left:39px;top:195px" width="13" height="13" viewBox="0 0 13 13"><rect x="0.5" y="0.5" width="12" height="12" rx="3" fill="#f4f4f4" stroke="#484848"/></svg>
<span class="t" style="left:56.98px;top:195px;font-size:12.2px;line-height:14px;color:#000;transform:scaleX(0.8986);">Terzaghi Weighting</span>
<svg style="left:39px;top:211px" width="13" height="13" viewBox="0 0 13 13"><rect x="0" y="0" width="13" height="13" rx="3" fill="#0a5fc2"/><path d="M3.2 6.6L5.4 8.9L9.9 4.1" fill="none" stroke="#fff" stroke-width="1.1"/></svg>
<svg style="left:22px;top:214px" width="9" height="9" viewBox="0 0 9 9"><rect x="0.5" y="0.5" width="8" height="8" rx="1.2" fill="#fff" stroke="#919191"/><path d="M2 4.5H7M4.5 2V7" stroke="#3c50b4" stroke-width="1" fill="none"/></svg>
<span class="t" style="left:56.32px;top:211px;font-size:12.2px;line-height:14px;color:#000;transform:scaleX(0.9053);">Legend</span>
<svg style="left:39px;top:227px" width="13" height="13" viewBox="0 0 13 13"><rect x="0.5" y="0.5" width="12" height="12" rx="3" fill="#f4f4f4" stroke="#484848"/></svg>
<svg style="left:22px;top:230px" width="9" height="9" viewBox="0 0 9 9"><rect x="0.5" y="0.5" width="8" height="8" rx="1.2" fill="#fff" stroke="#919191"/><path d="M2 4.5H7M4.5 2V7" stroke="#3c50b4" stroke-width="1" fill="none"/></svg>
<span class="t" style="left:56.18px;top:227px;font-size:12.2px;line-height:14px;color:#000;transform:scaleX(0.9321);">Intersections</span>
<svg style="left:39px;top:243px" width="13" height="13" viewBox="0 0 13 13"><circle cx="6.5" cy="6.5" r="6" fill="#e4e4e4" stroke="#d2d2d2" stroke-width="0.8"/><path d="M5 3.6V9.4L8.6 6.5Z" fill="#666"/></svg>
<svg style="left:22px;top:246px" width="9" height="9" viewBox="0 0 9 9"><rect x="0.5" y="0.5" width="8" height="8" rx="1.2" fill="#fff" stroke="#919191"/><path d="M2 4.5H7" stroke="#3c50b4" stroke-width="1" fill="none"/></svg>
<span class="t" style="left:56.35px;top:243px;font-size:12.2px;line-height:14px;color:#000;transform:scaleX(0.8665);">Planes</span>
<svg style="left:58px;top:259px" width="13" height="13" viewBox="0 0 13 13"><rect x="0" y="0" width="13" height="13" rx="3" fill="#0a5fc2"/><path d="M3.2 6.6L5.4 8.9L9.9 4.1" fill="none" stroke="#fff" stroke-width="1.1"/></svg>
<svg style="left:41px;top:262px" width="9" height="9" viewBox="0 0 9 9"><rect x="0.5" y="0.5" width="8" height="8" rx="1.2" fill="#fff" stroke="#919191"/><path d="M2 4.5H7M4.5 2V7" stroke="#3c50b4" stroke-width="1" fill="none"/></svg>
<span class="t" style="left:75.55px;top:259px;font-size:12.2px;line-height:14px;color:#000;transform:scaleX(0.8748);">Major Planes</span>
<svg style="left:58px;top:275px" width="13" height="13" viewBox="0 0 13 13"><rect x="0.5" y="0.5" width="12" height="12" rx="3" fill="#f4f4f4" stroke="#484848"/></svg>
<span class="t" style="left:75.87px;top:275px;font-size:12.2px;line-height:14px;color:#000;transform:scaleX(0.8608);">Grid Data Planes</span>
<svg style="left:39px;top:291px" width="13" height="13" viewBox="0 0 13 13"><rect x="0" y="0" width="13" height="13" rx="3" fill="#0a5fc2"/><path d="M3.2 6.6L5.4 8.9L9.9 4.1" fill="none" stroke="#fff" stroke-width="1.1"/></svg>
<svg style="left:22px;top:294px" width="9" height="9" viewBox="0 0 9 9"><rect x="0.5" y="0.5" width="8" height="8" rx="1.2" fill="#fff" stroke="#919191"/><path d="M2 4.5H7M4.5 2V7" stroke="#3c50b4" stroke-width="1" fill="none"/></svg>
<span class="t" style="left:56.98px;top:291px;font-size:12.2px;line-height:14px;color:#000;transform:scaleX(0.9068);">Tools</span>
<svg style="left:39px;top:307px" width="13" height="13" viewBox="0 0 13 13"><circle cx="6.5" cy="6.5" r="6" fill="#e4e4e4" stroke="#d2d2d2" stroke-width="0.8"/><path d="M5 3.6V9.4L8.6 6.5Z" fill="#666"/></svg>
<svg style="left:22px;top:310px" width="9" height="9" viewBox="0 0 9 9"><rect x="0.5" y="0.5" width="8" height="8" rx="1.2" fill="#fff" stroke="#919191"/><path d="M2 4.5H7" stroke="#3c50b4" stroke-width="1" fill="none"/></svg>
<span class="t" style="left:56.72px;top:307px;font-size:12.2px;line-height:14px;color:#000;transform:scaleX(0.8784);">Object Visibility</span>
<svg style="left:58px;top:323px" width="13" height="13" viewBox="0 0 13 13"><rect x="0" y="0" width="13" height="13" rx="3" fill="#0a5fc2"/><path d="M3.2 6.6L5.4 8.9L9.9 4.1" fill="none" stroke="#fff" stroke-width="1.1"/></svg>
<span class="t" style="left:75.91px;top:323px;font-size:12.2px;line-height:14px;color:#000;transform:scaleX(0.9016);">Sets</span>
<svg style="left:58px;top:339px" width="13" height="13" viewBox="0 0 13 13"><rect x="0.5" y="0.5" width="12" height="12" rx="3" fill="#f4f4f4" stroke="#484848"/></svg>
<svg style="left:41px;top:342px" width="9" height="9" viewBox="0 0 9 9"><rect x="0.5" y="0.5" width="8" height="8" rx="1.2" fill="#fff" stroke="#919191"/><path d="M2 4.5H7M4.5 2V7" stroke="#3c50b4" stroke-width="1" fill="none"/></svg>
<span class="t" style="left:75.90px;top:339px;font-size:12.2px;line-height:14px;color:#000;transform:scaleX(0.9090);">Stereonet Overlay</span>
<svg style="left:58px;top:355px" width="13" height="13" viewBox="0 0 13 13"><rect x="0.5" y="0.5" width="12" height="12" rx="3" fill="#f4f4f4" stroke="#484848"/></svg>
<span class="t" style="left:75.88px;top:355px;font-size:12.2px;line-height:14px;color:#000;transform:scaleX(0.8551);">Global Mean</span>
<svg style="left:58px;top:371px" width="13" height="13" viewBox="0 0 13 13"><rect x="0.5" y="0.5" width="12" height="12" rx="3" fill="#f4f4f4" stroke="#484848"/></svg>
<span class="t" style="left:75.87px;top:371px;font-size:12.2px;line-height:14px;color:#000;transform:scaleX(0.8621);">Global Best Fit</span>
<svg style="left:58px;top:387px" width="13" height="13" viewBox="0 0 13 13"><rect x="0.5" y="0.5" width="12" height="12" rx="3" fill="#f4f4f4" stroke="#484848"/></svg>
<span class="t" style="left:76.18px;top:387px;font-size:12.2px;line-height:14px;color:#000;transform:scaleX(0.9023);">Traverses</span>
<div class="b" style="left:13px;top:440px;width:214px;height:13px;background:#cdeafd;border:1px solid #6cb8e6;"></div><svg style="left:18px;top:443.8px" width="11" height="6" viewBox="0 0 11 6"><path d="M0.6 0.2H10L5.3 5.6Z" fill="#5fb2e3"/></svg><span class="t" style="left:85.73px;top:440px;font-size:12.4px;line-height:14px;color:#1e1e1e;font-weight:bold;transform:scaleX(0.9516);">Display Settings</span>
<svg style="left:13px;top:458px" width="130" height="22" viewBox="0 0 130 22"><defs><linearGradient id="exg" x1="0" y1="0" x2="0" y2="1"><stop offset="0" stop-color="#a8d4ea"/><stop offset="1" stop-color="#23788f"/></linearGradient></defs><path d="M7.200 11.400L10.700 15.800L19.800 5.300" fill="none" stroke="#3f7690" stroke-width="1.700"/><path d="M43.200 4H46.600L45.700 13.500H44.100Z" fill="url(#exg)"/><ellipse cx="44.900" cy="16.300" rx="1.900" ry="1.100" fill="#23788f"/><g transform="translate(-13 -458)"><g fill="none" stroke="#111" stroke-width="1.600"><path d="M91.400 464.500V462.300H83.300V475.700H91.400V473.400"/><path d="M124 464.500V462.300H115.800V475.700H124V473.400"/></g><path d="M87.900 467.600H93.600V465.300L98.200 469L93.600 472.700V470.400H87.900Z" fill="#000"/><path d="M129.200 467.600H123.500V465.300L118.900 469L123.500 472.700V470.400H129.200Z" fill="#000"/></g></svg>
<div class="b" style="left:13px;top:486px;width:214px;height:546px;background:#fff;border:1px solid #d0d0d0;border-top:2px solid #828282;border-left:2px solid #828282;"></div>
<div class="b" style="left:15px;top:488.5px;width:14px;height:510px;background:#f0f0f0;"></div>
<div class="b" style="left:15px;top:488.5px;width:211px;height:17px;background:#f0f0f0;"></div>
<svg style="left:17px;top:492.3px" width="9" height="9" viewBox="0 0 9 9"><rect x="0.5" y="0.5" width="8" height="8" fill="#fff" stroke="#222"/><path d="M2 4.5H7" stroke="#000" stroke-width="1" fill="none"/></svg>
<span class="t" style="left:32.74px;top:491px;font-size:11px;line-height:12px;color:#000;font-weight:bold;transform:scaleX(1.0841);">Stereonet Options</span>
<div class="b" style="left:29px;top:521.5px;width:197px;height:1px;background:#f0f0f0;"></div>
<div class="b" style="left:130px;top:505.5px;width:1px;height:17px;background:#f0f0f0;"></div>
<span class="t" style="left:31.72px;top:508px;font-size:11px;line-height:12px;color:#000;">Projection</span>
<span class="t" style="left:134.75px;top:508px;font-size:11px;line-height:12px;color:#000;transform:scaleX(0.9649);">Equal Angle</span>
<div class="b" style="left:29px;top:538.5px;width:197px;height:1px;background:#f0f0f0;"></div>
<div class="b" style="left:130px;top:522.5px;width:1px;height:17px;background:#f0f0f0;"></div>
<span class="t" style="left:31.76px;top:525px;font-size:11px;line-height:12px;color:#000;transform:scaleX(0.9581);">Hemisphere</span>
<span class="t" style="left:134.73px;top:525px;font-size:11px;line-height:12px;color:#000;transform:scaleX(0.9833);">Lower</span>
<div class="b" style="left:29px;top:555.5px;width:197px;height:1px;background:#f0f0f0;"></div>
<div class="b" style="left:130px;top:539.5px;width:1px;height:17px;background:#f0f0f0;"></div>
<span class="t" style="left:31.76px;top:542px;font-size:11px;line-height:12px;color:#000;transform:scaleX(0.9506);">Labels</span>
<span class="t" style="left:134.82px;top:542px;font-size:11px;line-height:12px;color:#000;transform:scaleX(0.8857);">NSEW</span>
<div class="b" style="left:29px;top:572.5px;width:197px;height:1px;background:#f0f0f0;"></div>
<div class="b" style="left:130px;top:556.5px;width:1px;height:17px;background:#f0f0f0;"></div>
<span class="t" style="left:31.73px;top:559px;font-size:11px;line-height:12px;color:#000;transform:scaleX(0.9870);">Exterior Ticks</span>
<svg style="left:136px;top:556.8px" width="13" height="13" viewBox="0 0 13 13"><rect x="0" y="0" width="13" height="13" rx="3" fill="#0a5fc2"/><path d="M3.2 6.6L5.4 8.9L9.9 4.1" fill="none" stroke="#fff" stroke-width="1.1"/></svg>
<span class="t" style="left:153.24px;top:559px;font-size:11px;line-height:12px;color:#000;transform:scaleX(0.9381);">Show</span>
<div class="b" style="left:29px;top:589.5px;width:197px;height:1px;background:#f0f0f0;"></div>
<div class="b" style="left:130px;top:573.5px;width:1px;height:17px;background:#f0f0f0;"></div>
<span class="t" style="left:31.75px;top:576px;font-size:11px;line-height:12px;color:#000;transform:scaleX(0.9645);">Perimeter Circle</span>
<svg style="left:136px;top:573.8px" width="13" height="13" viewBox="0 0 13 13"><rect x="0" y="0" width="13" height="13" rx="3" fill="#0a5fc2"/><path d="M3.2 6.6L5.4 8.9L9.9 4.1" fill="none" stroke="#fff" stroke-width="1.1"/></svg>
<span class="t" style="left:153.24px;top:576px;font-size:11px;line-height:12px;color:#000;transform:scaleX(0.9381);">Show</span>
<div class="b" style="left:29px;top:606.5px;width:197px;height:1px;background:#f0f0f0;"></div>
<div class="b" style="left:130px;top:590.5px;width:1px;height:17px;background:#f0f0f0;"></div>
<span class="t" style="left:32.06px;top:593px;font-size:11px;line-height:12px;color:#000;transform:scaleX(0.9772);">Center Cross</span>
<svg style="left:136px;top:590.8px" width="13" height="13" viewBox="0 0 13 13"><rect x="0" y="0" width="13" height="13" rx="3" fill="#0a5fc2"/><path d="M3.2 6.6L5.4 8.9L9.9 4.1" fill="none" stroke="#fff" stroke-width="1.1"/></svg>
<span class="t" style="left:153.24px;top:593px;font-size:11px;line-height:12px;color:#000;transform:scaleX(0.9381);">Show</span>
<div class="b" style="left:29px;top:623.5px;width:197px;height:1px;background:#f0f0f0;"></div>
<div class="b" style="left:130px;top:607.5px;width:1px;height:17px;background:#f0f0f0;"></div>
<span class="t" style="left:32.08px;top:610px;font-size:11px;line-height:12px;color:#000;transform:scaleX(0.9479);">Cross Hairs</span>
<svg style="left:136px;top:607.8px" width="13" height="13" viewBox="0 0 13 13"><rect x="0.5" y="0.5" width="12" height="12" rx="3" fill="#f4f4f4" stroke="#484848"/></svg>
<span class="t" style="left:152.84px;top:610px;font-size:11px;line-height:12px;color:#000;transform:scaleX(0.9797);">Hidden</span>
<div class="b" style="left:29px;top:640.5px;width:197px;height:1px;background:#f0f0f0;"></div>
<div class="b" style="left:130px;top:624.5px;width:1px;height:17px;background:#f0f0f0;"></div>
<span class="t" style="left:32.39px;top:627px;font-size:11px;line-height:12px;color:#000;transform:scaleX(0.9334);">Tick Spacing</span>
<span class="t" style="left:135.93px;top:627px;font-size:11px;line-height:12px;color:#000;transform:scaleX(1.0575);">10°</span>
<div class="b" style="left:29px;top:657.5px;width:197px;height:1px;background:#f0f0f0;"></div>
<div class="b" style="left:130px;top:641.5px;width:1px;height:17px;background:#f0f0f0;"></div>
<span class="t" style="left:32.11px;top:644px;font-size:11px;line-height:12px;color:#000;transform:scaleX(0.9889);">Outer Grid Width</span>
<span class="t" style="left:136.39px;top:644px;font-size:11px;line-height:12px;color:#000;transform:scaleX(0.9367);">3</span>
<div class="b" style="left:29px;top:674.5px;width:197px;height:1px;background:#f0f0f0;"></div>
<div class="b" style="left:130px;top:658.5px;width:1px;height:17px;background:#f0f0f0;"></div>
<span class="t" style="left:31.61px;top:661px;font-size:11px;line-height:12px;color:#000;">Inner Grid Width</span>
<span class="t" style="left:136.38px;top:661px;font-size:11px;line-height:12px;color:#000;">1</span>
<div class="b" style="left:29px;top:691.5px;width:197px;height:1px;background:#f0f0f0;"></div>
<div class="b" style="left:130px;top:675.5px;width:1px;height:17px;background:#f0f0f0;"></div>
<span class="t" style="left:32.10px;top:678px;font-size:11px;line-height:12px;color:#000;transform:scaleX(1.0121);">Overlay Width</span>
<span class="t" style="left:136.38px;top:678px;font-size:11px;line-height:12px;color:#000;">1</span>
<div class="b" style="left:29px;top:708.5px;width:197px;height:1px;background:#f0f0f0;"></div>
<div class="b" style="left:130px;top:692.5px;width:1px;height:17px;background:#f0f0f0;"></div>
<span class="t" style="left:31.77px;top:695px;font-size:11px;line-height:12px;color:#000;transform:scaleX(0.9470);">Legend Scale</span>
<span class="t" style="left:135.95px;top:695px;font-size:11px;line-height:12px;color:#000;transform:scaleX(1.0276);">100%</span>
<div class="b" style="left:29px;top:725.5px;width:197px;height:1px;background:#f0f0f0;"></div>
<div class="b" style="left:130px;top:709.5px;width:1px;height:17px;background:#f0f0f0;"></div>
<span class="t" style="left:31.74px;top:712px;font-size:11px;line-height:12px;color:#000;transform:scaleX(0.9717);">Legend Location</span>
<span class="t" style="left:134.71px;top:712px;font-size:11px;line-height:12px;color:#000;transform:scaleX(1.0080);">Right</span>
<div class="b" style="left:29px;top:742.5px;width:197px;height:1px;background:#f0f0f0;"></div>
<div class="b" style="left:130px;top:726.5px;width:1px;height:17px;background:#f0f0f0;"></div>
<span class="t" style="left:31.74px;top:729px;font-size:11px;line-height:12px;color:#000;transform:scaleX(0.9753);">Filter Label</span>
<svg style="left:136px;top:726.8px" width="13" height="13" viewBox="0 0 13 13"><rect x="0" y="0" width="13" height="13" rx="3" fill="#0a5fc2"/><path d="M3.2 6.6L5.4 8.9L9.9 4.1" fill="none" stroke="#fff" stroke-width="1.1"/></svg>
<span class="t" style="left:153.24px;top:729px;font-size:11px;line-height:12px;color:#000;transform:scaleX(0.9381);">Show</span>
<div class="b" style="left:15px;top:743.5px;width:211px;height:17px;background:#f0f0f0;"></div>
<svg style="left:17px;top:747.3px" width="9" height="9" viewBox="0 0 9 9"><rect x="0.5" y="0.5" width="8" height="8" fill="#fff" stroke="#222"/><path d="M2 4.5H7" stroke="#000" stroke-width="1" fill="none"/></svg>
<span class="t" style="left:32.74px;top:746px;font-size:11px;line-height:12px;color:#000;font-weight:bold;transform:scaleX(1.0959);">Stereonet Fonts</span>
<div class="b" style="left:29px;top:776.5px;width:197px;height:1px;background:#f0f0f0;"></div>
<div class="b" style="left:130px;top:760.5px;width:1px;height:17px;background:#f0f0f0;"></div>
<span class="t" style="left:31.73px;top:763px;font-size:11px;line-height:12px;color:#000;transform:scaleX(0.9879);">Legend Font</span>
<span class="t" style="left:133.90px;top:763px;font-size:11px;line-height:12px;color:#000;transform:scaleX(0.9533);">Arial</span>
<div class="b" style="left:29px;top:793.5px;width:197px;height:1px;background:#f0f0f0;"></div>
<div class="b" style="left:130px;top:777.5px;width:1px;height:17px;background:#f0f0f0;"></div>
<span class="t" style="left:31.73px;top:780px;font-size:11px;line-height:12px;color:#000;transform:scaleX(0.9850);">Legend Text Size</span>
<span class="t" style="left:134.75px;top:780px;font-size:11px;line-height:12px;color:#000;transform:scaleX(0.9666);">Normal</span>
<div class="b" style="left:29px;top:810.5px;width:197px;height:1px;background:#f0f0f0;"></div>
<div class="b" style="left:130px;top:794.5px;width:1px;height:17px;background:#f0f0f0;"></div>
<span class="t" style="left:31.74px;top:797px;font-size:11px;line-height:12px;color:#000;transform:scaleX(0.9775);">Label Text Size</span>
<span class="t" style="left:134.75px;top:797px;font-size:11px;line-height:12px;color:#000;transform:scaleX(0.9666);">Normal</span>
<div class="b" style="left:15px;top:811.5px;width:211px;height:17px;background:#f0f0f0;"></div>
<svg style="left:17px;top:815.3px" width="9" height="9" viewBox="0 0 9 9"><rect x="0.5" y="0.5" width="8" height="8" fill="#fff" stroke="#222"/><path d="M2 4.5H7" stroke="#000" stroke-width="1" fill="none"/></svg>
<span class="t" style="left:32.74px;top:814px;font-size:11px;line-height:12px;color:#000;font-weight:bold;transform:scaleX(1.0792);">Stereonet Colors</span>
<div class="b" style="left:29px;top:844.5px;width:197px;height:1px;background:#f0f0f0;"></div>
<div class="b" style="left:130px;top:828.5px;width:1px;height:17px;background:#f0f0f0;"></div>
<span class="t" style="left:32.10px;top:831px;font-size:11px;line-height:12px;color:#000;transform:scaleX(1.0141);">Stereonet</span>
<div class="b" style="left:134px;top:831px;width:17px;height:12px;background:#fff;border:1px solid #000;"></div>
<div class="b" style="left:29px;top:861.5px;width:197px;height:1px;background:#f0f0f0;"></div>
<div class="b" style="left:130px;top:845.5px;width:1px;height:17px;background:#f0f0f0;"></div>
<span class="t" style="left:31.74px;top:848px;font-size:11px;line-height:12px;color:#000;transform:scaleX(0.9719);">Background</span>
<div class="b" style="left:134px;top:848px;width:17px;height:12px;background:#fff;border:1px solid #000;"></div>
<div class="b" style="left:29px;top:878.5px;width:197px;height:1px;background:#f0f0f0;"></div>
<div class="b" style="left:130px;top:862.5px;width:1px;height:17px;background:#f0f0f0;"></div>
<span class="t" style="left:32.06px;top:865px;font-size:11px;line-height:12px;color:#000;transform:scaleX(0.9741);">Grid Outer</span>
<div class="b" style="left:134px;top:865px;width:17px;height:12px;background:#000;border:1px solid #000;"></div>
<div class="b" style="left:29px;top:895.5px;width:197px;height:1px;background:#f0f0f0;"></div>
<div class="b" style="left:130px;top:879.5px;width:1px;height:17px;background:#f0f0f0;"></div>
<span class="t" style="left:32.06px;top:882px;font-size:11px;line-height:12px;color:#000;transform:scaleX(0.9836);">Grid Inner</span>
<div class="b" style="left:134px;top:882px;width:17px;height:12px;background:#000;border:1px solid #000;"></div>
<div class="b" style="left:29px;top:912.5px;width:197px;height:1px;background:#f0f0f0;"></div>
<div class="b" style="left:130px;top:896.5px;width:1px;height:17px;background:#f0f0f0;"></div>
<span class="t" style="left:31.70px;top:899px;font-size:11px;line-height:12px;color:#000;transform:scaleX(1.0242);">Label Text</span>
<div class="b" style="left:134px;top:899px;width:17px;height:12px;background:#000;border:1px solid #000;"></div>
<div class="b" style="left:29px;top:929.5px;width:197px;height:1px;background:#f0f0f0;"></div>
<div class="b" style="left:130px;top:913.5px;width:1px;height:17px;background:#f0f0f0;"></div>
<span class="t" style="left:31.70px;top:916px;font-size:11px;line-height:12px;color:#000;transform:scaleX(1.0220);">Legend Text</span>
<div class="b" style="left:134px;top:916px;width:17px;height:12px;background:#000;border:1px solid #000;"></div>
<div class="b" style="left:29px;top:946.5px;width:197px;height:1px;background:#f0f0f0;"></div>
<div class="b" style="left:130px;top:930.5px;width:1px;height:17px;background:#f0f0f0;"></div>
<span class="t" style="left:32.11px;top:933px;font-size:11px;line-height:12px;color:#000;">Overlay</span>
<div class="b" style="left:134px;top:933px;width:17px;height:12px;background:#c0c0c0;border:1px solid #000;"></div>
<div class="b" style="left:29px;top:963.5px;width:197px;height:1px;background:#f0f0f0;"></div>
<div class="b" style="left:130px;top:947.5px;width:1px;height:17px;background:#f0f0f0;"></div>
<span class="t" style="left:32.08px;top:950px;font-size:11px;line-height:12px;color:#000;transform:scaleX(0.9458);">Global Mean</span>
<div class="b" style="left:134px;top:950px;width:17px;height:12px;background:#005800;border:1px solid #000;"></div>
<div class="b" style="left:29px;top:980.5px;width:197px;height:1px;background:#f0f0f0;"></div>
<div class="b" style="left:130px;top:964.5px;width:1px;height:17px;background:#f0f0f0;"></div>
<span class="t" style="left:32.08px;top:967px;font-size:11px;line-height:12px;color:#000;transform:scaleX(0.9524);">Global Best Fit</span>
<div class="b" style="left:134px;top:967px;width:17px;height:12px;background:#00007c;border:1px solid #000;"></div>
<div class="b" style="left:15px;top:981.5px;width:211px;height:17px;background:#f0f0f0;"></div>
<svg style="left:17px;top:985.3px" width="9" height="9" viewBox="0 0 9 9"><rect x="0.5" y="0.5" width="8" height="8" fill="#fff" stroke="#222"/><path d="M2 4.5H7M4.5 2V7" stroke="#000" stroke-width="1" fill="none"/></svg>
<span class="t" style="left:32.34px;top:984px;font-size:11px;line-height:12px;color:#000;font-weight:bold;transform:scaleX(1.0648);">Default Tool Colors</span>
<svg style="left:0;top:0" width="1936" height="1048" viewBox="0 0 1936 1048"><path d="M804.50 160.90 L804.50 149.90M866.58 166.33 L868.49 155.50M926.77 182.46 L930.53 172.12M983.25 208.80 L988.75 199.27M1034.30 244.54 L1041.37 236.11M1078.36 288.60 L1086.79 281.53M1114.10 339.65 L1123.63 334.15M1140.44 396.13 L1150.78 392.37M1156.57 456.32 L1167.40 454.41M1162.00 518.40 L1173.00 518.40M1156.57 580.48 L1167.40 582.39M1140.44 640.67 L1150.78 644.43M1114.10 697.15 L1123.63 702.65M1078.36 748.20 L1086.79 755.27M1034.30 792.26 L1041.37 800.69M983.25 828.00 L988.75 837.53M926.77 854.34 L930.53 864.68M866.58 870.47 L868.49 881.30M804.50 875.90 L804.50 886.90M742.42 870.47 L740.51 881.30M682.23 854.34 L678.47 864.68M625.75 828.00 L620.25 837.53M574.70 792.26 L567.63 800.69M530.64 748.20 L522.21 755.27M494.90 697.15 L485.37 702.65M468.56 640.67 L458.22 644.43M452.43 580.48 L441.60 582.39M447.00 518.40 L436.00 518.40M452.43 456.32 L441.60 454.41M468.56 396.13 L458.22 392.37M494.90 339.65 L485.37 334.15M530.64 288.60 L522.21 281.53M574.70 244.54 L567.63 236.11M625.75 208.80 L620.25 199.27M682.23 182.46 L678.47 172.12M742.42 166.33 L740.51 155.50" stroke="#000" stroke-width="2" fill="none"/><circle cx="804.5" cy="518.4" r="357.5" fill="none" stroke="#000" stroke-width="2.2"/><path d="M494.90 339.65 A357.50 357.50 0 0 1 742.42 166.33 M1114.10 697.15 A357.50 357.50 0 0 1 866.58 870.47" stroke="#a80808" stroke-width="1" fill="none"/><path d="M793.5 518.5H815.5M804.5 507.4V529.4" stroke="#000" stroke-width="1" fill="none"/><path d="M835.66 874.54 A524.19 524.19 0 0 1 773.34 162.26 M518.99 303.25 A1045.26 1045.26 0 0 1 1090.01 733.55" stroke="#8b0000" stroke-width="1" fill="none" opacity="0.9"/><path d="M1097.35 313.35 A4101.85 4101.85 0 0 1 511.65 723.45" stroke="#8b0000" stroke-width="1" fill="none" opacity="0.9" transform="translate(0.3 0.500)"/><path d="M869.42 472.94 L1009.55 374.82 A250.32 250.32 0 0 1 1031.37 624.19 L876.33 551.89 A79.26 79.26 0 0 0 869.42 472.94 Z M775.55 682.57 L745.49 853.09 A339.85 339.85 0 0 1 526.11 713.33 L667.94 614.02 A166.70 166.70 0 0 0 775.55 682.57 Z M494.90 339.65 L587.71 393.24 A250.32 250.32 0 0 1 761.03 271.88 L742.42 166.33 M1114.10 697.15 L1021.29 643.56 A250.32 250.32 0 0 1 847.97 764.92 L866.58 870.47" stroke="#c81e1e" stroke-width="1" fill="none"/><path d="M953.5 504.5H965.5M959.5 498.5V510.5M610.5 250.5H622.5M616.5 244.5V256.5M647.5 718.5H659.5M653.5 712.5V724.5" stroke="#8b0000" stroke-width="1" fill="none"/></svg>
<span class="t" style="left:796.16px;top:129px;font-size:22.2px;line-height:25px;color:#000;transform:scaleX(0.9813);">N</span>
<span class="t" style="left:797.09px;top:888px;font-size:22.2px;line-height:25px;color:#000;transform:scaleX(1.0106);">S</span>
<span class="t" style="left:414.69px;top:507px;font-size:22.2px;line-height:25px;color:#000;transform:scaleX(0.9732);">W</span>
<span class="t" style="left:1176.26px;top:507px;font-size:22.2px;line-height:25px;color:#000;transform:scaleX(0.9257);">E</span>
<span class="t" style="left:842.24px;top:470px;font-size:19.2px;line-height:21px;color:#8b0000;transform:scaleX(1.1153);">3m</span>
<span class="t" style="left:664.06px;top:532px;font-size:19.2px;line-height:21px;color:#8b0000;transform:scaleX(1.1382);">1m</span>
<span class="t" style="left:812.78px;top:533px;font-size:19.2px;line-height:21px;color:#8b0000;transform:scaleX(1.1649);">2m</span>
<span class="t" style="left:615.91px;top:252px;font-size:19.2px;line-height:21px;color:#8b0000;transform:scaleX(1.1322);">2m</span>
<span class="t" style="left:958.96px;top:507px;font-size:19.2px;line-height:21px;color:#8b0000;transform:scaleX(1.1423);">1m</span>
<span class="t" style="left:653.25px;top:720px;font-size:19.2px;line-height:21px;color:#8b0000;transform:scaleX(1.1112);">3m</span>
<div class="b" style="left:1251px;top:160px;width:377px;height:103px;background:#fff;border:2px solid #000;"></div>
<div class="b" style="left:1251px;top:182px;width:377px;height:1px;background:#000;"></div>
<div class="b" style="left:1251px;top:204px;width:377px;height:1px;background:#000;"></div>
<div class="b" style="left:1251px;top:223px;width:377px;height:1px;background:#000;"></div>
<div class="b" style="left:1251px;top:242.5px;width:377px;height:1px;background:#000;"></div>
<div class="b" style="left:1300px;top:160px;width:1px;height:23px;background:#000;"></div>
<div class="b" style="left:1300px;top:204px;width:1px;height:58px;background:#000;"></div>
<div class="b" style="left:1345px;top:160px;width:1px;height:23px;background:#000;"></div>
<div class="b" style="left:1345px;top:204px;width:1px;height:58px;background:#000;"></div>
<div class="b" style="left:1435px;top:160px;width:1px;height:23px;background:#000;"></div>
<div class="b" style="left:1525px;top:160px;width:1px;height:23px;background:#000;"></div>
<span class="t" style="left:1306.74px;top:165px;font-size:11px;line-height:12px;color:#000;font-weight:bold;transform:scaleX(1.0562);">Color</span>
<span class="t" style="left:1374.28px;top:165px;font-size:11px;line-height:12px;color:#000;font-weight:bold;transform:scaleX(1.0860);">Trend</span>
<span class="t" style="left:1460.76px;top:165px;font-size:11px;line-height:12px;color:#000;font-weight:bold;transform:scaleX(1.0328);">Plunge</span>
<span class="t" style="left:1533.84px;top:165px;font-size:11px;line-height:12px;color:#000;font-weight:bold;transform:scaleX(1.0629);">Label</span>
<span class="t" style="left:1392.75px;top:187px;font-size:11px;line-height:12px;color:#000;font-weight:bold;transform:scaleX(1.0508);">Mean Set Planes</span>
<span class="t" style="left:1267.80px;top:207px;font-size:11px;line-height:12px;color:#000;">1m</span>
<span class="t" style="left:1384.07px;top:207px;font-size:11px;line-height:12px;color:#000;">85</span>
<span class="t" style="left:1474.20px;top:207px;font-size:11px;line-height:12px;color:#000;">43</span>
<div class="b" style="left:1315.5px;top:206px;width:15px;height:15px;background:#8b0000;border:1px solid #4a0000;"></div>
<span class="t" style="left:1267.94px;top:227px;font-size:11px;line-height:12px;color:#000;">2m</span>
<span class="t" style="left:1381.04px;top:227px;font-size:11px;line-height:12px;color:#000;">325</span>
<span class="t" style="left:1477.15px;top:227px;font-size:11px;line-height:12px;color:#000;">5</span>
<div class="b" style="left:1315.5px;top:226px;width:15px;height:15px;background:#8b0000;border:1px solid #4a0000;"></div>
<span class="t" style="left:1267.99px;top:246px;font-size:11px;line-height:12px;color:#000;">3m</span>
<span class="t" style="left:1381.04px;top:246px;font-size:11px;line-height:12px;color:#000;">217</span>
<span class="t" style="left:1474.01px;top:246px;font-size:11px;line-height:12px;color:#000;">20</span>
<div class="b" style="left:1315.5px;top:245px;width:15px;height:15px;background:#8b0000;border:1px solid #4a0000;"></div>
<div class="b" style="left:1251px;top:269px;width:377px;height:88.5px;background:#fff;border:2px solid #000;"></div>
<div class="b" style="left:1251px;top:291px;width:377px;height:1px;background:#000;"></div>
<div class="b" style="left:1251px;top:312.5px;width:377px;height:1px;background:#000;"></div>
<div class="b" style="left:1251px;top:334px;width:377px;height:1px;background:#000;"></div>
<div class="b" style="left:1458px;top:269px;width:1px;height:88px;background:#000;"></div>
<span class="t" style="left:1393.85px;top:273px;font-size:11px;line-height:12px;color:#000;font-weight:bold;transform:scaleX(1.0498);">Plot Mode</span>
<span class="t" style="left:1465.02px;top:273px;font-size:11px;line-height:12px;color:#000;transform:scaleX(1.0048);">Pole Vectors</span>
<span class="t" style="left:1377.44px;top:295px;font-size:11px;line-height:12px;color:#000;font-weight:bold;transform:scaleX(1.0416);">Vector Count</span>
<span class="t" style="left:1465.35px;top:295px;font-size:11px;line-height:12px;color:#000;">61 (40 Entries)</span>
<span class="t" style="left:1380.62px;top:317px;font-size:11px;line-height:12px;color:#000;font-weight:bold;transform:scaleX(1.0858);">Hemisphere</span>
<span class="t" style="left:1464.93px;top:317px;font-size:11px;line-height:12px;color:#000;transform:scaleX(1.1010);">Lower</span>
<span class="t" style="left:1392.75px;top:339px;font-size:11px;line-height:12px;color:#000;font-weight:bold;transform:scaleX(1.0510);">Projection</span>
<span class="t" style="left:1465.04px;top:339px;font-size:11px;line-height:12px;color:#000;transform:scaleX(0.9771);">Equal Angle</span>
</body></html>
